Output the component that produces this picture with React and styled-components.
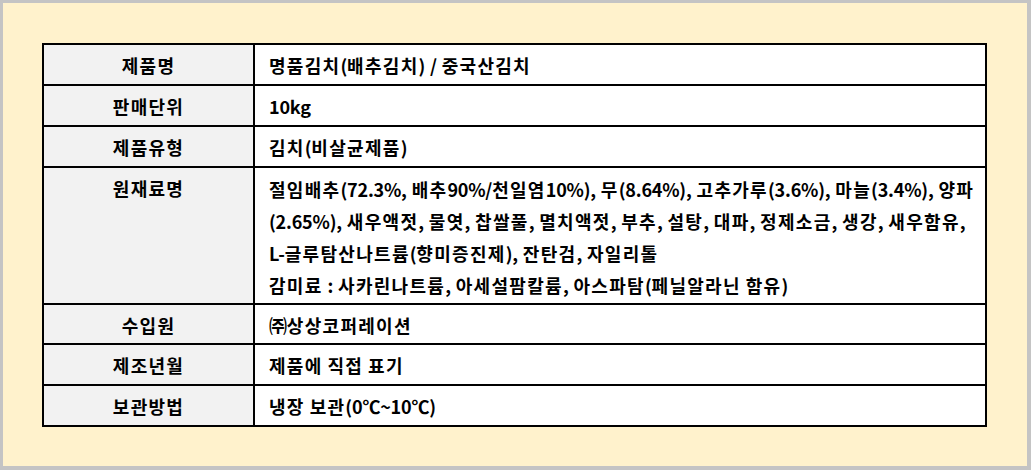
import React from "react";
import styled, { createGlobalStyle } from "styled-components";

const Global = createGlobalStyle`
  html, body { margin: 0; padding: 0; background: #ffffff; }
  * { box-sizing: border-box; }
`;

const Frame = styled.div`
  width: 1031px;
  height: 470px;
  background: #fff2cc;
  border: 3px solid #c4c4c4;
  border-right-width: 4px;
  border-bottom-width: 4px;
  padding: 40px 0 0 39px;
  font-family: "Noto Sans CJK KR", "Noto Sans", sans-serif;
  font-weight: 700;
  font-size: 18px;
  letter-spacing: -0.2px;
  word-spacing: 1px;
  color: #000;
`;

const Table = styled.table`
  width: 945px;
  table-layout: fixed;
  border-collapse: collapse;
  border: 2px solid #000;
`;

const LabelCol = styled.col`
  width: 211px;
`;

const Row = styled.tr``;

const Label = styled.th`
  background: #f2f2f2;
  border: 2px solid #000;
  text-align: center;
  vertical-align: top;
  font-weight: 700;
  height: ${(p) => p.$h}px;
  padding: 5px 4px 0;
  line-height: 30px;
`;

const Value = styled.td`
  background: #ffffff;
  border: 2px solid #000;
  text-align: left;
  vertical-align: top;
  padding: 5px 0 0 14px;
  line-height: ${(p) => (p.$multi ? 32 : 30)}px;
`;

const Line = styled.div`
  white-space: nowrap;
`;

const Ko = styled.span`
  letter-spacing: 1.3px;
`;

const HANGUL = /([\uAC00-\uD7A3\u3131-\u318E]+)/;

function Text({ children }) {
  return children
    .split(HANGUL)
    .filter(Boolean)
    .map((part, i) =>
      HANGUL.test(part) ? <Ko key={i}>{part}</Ko> : <React.Fragment key={i}>{part}</React.Fragment>
    );
}

const rows = [
  { label: "제품명", value: ["명품김치(배추김치) / 중국산김치"] },
  { label: "판매단위", value: ["10kg"] },
  { label: "제품유형", value: ["김치(비살균제품)"] },
  {
    label: "원재료명",
    h: 137,
    value: [
      "절임배추(72.3%, 배추90%/천일염10%), 무(8.64%), 고추가루(3.6%), 마늘(3.4%), 양파",
      "(2.65%), 새우액젓, 물엿, 찹쌀풀, 멸치액젓, 부추, 설탕, 대파, 정제소금, 생강, 새우함유,",
      "L-글루탐산나트륨(향미증진제), 잔탄검, 자일리톨",
      "감미료 : 사카린나트륨, 아세설팜칼륨, 아스파탐(페닐알라닌 함유)",
    ],
  },
  { label: "수입원", h: 40, value: ["㈜상상코퍼레이션"] },
  { label: "제조년월", value: ["제품에 직접 표기"] },
  { label: "보관방법", value: ["냉장 보관(0℃~10℃)"] },
];

export default function App() {
  return (
    <>
      <Global />
      <Frame>
        <Table>
          <colgroup>
            <LabelCol />
            <col />
          </colgroup>
          <tbody>
            {rows.map((r) => (
              <Row key={r.label}>
                <Label $h={r.h || 41}>
                  <Text>{r.label}</Text>
                </Label>
                <Value $multi={r.value.length > 1}>
                  {r.value.map((l, i) => (
                    <Line key={i}>
                      <Text>{l}</Text>
                    </Line>
                  ))}
                </Value>
              </Row>
            ))}
          </tbody>
        </Table>
      </Frame>
    </>
  );
}
